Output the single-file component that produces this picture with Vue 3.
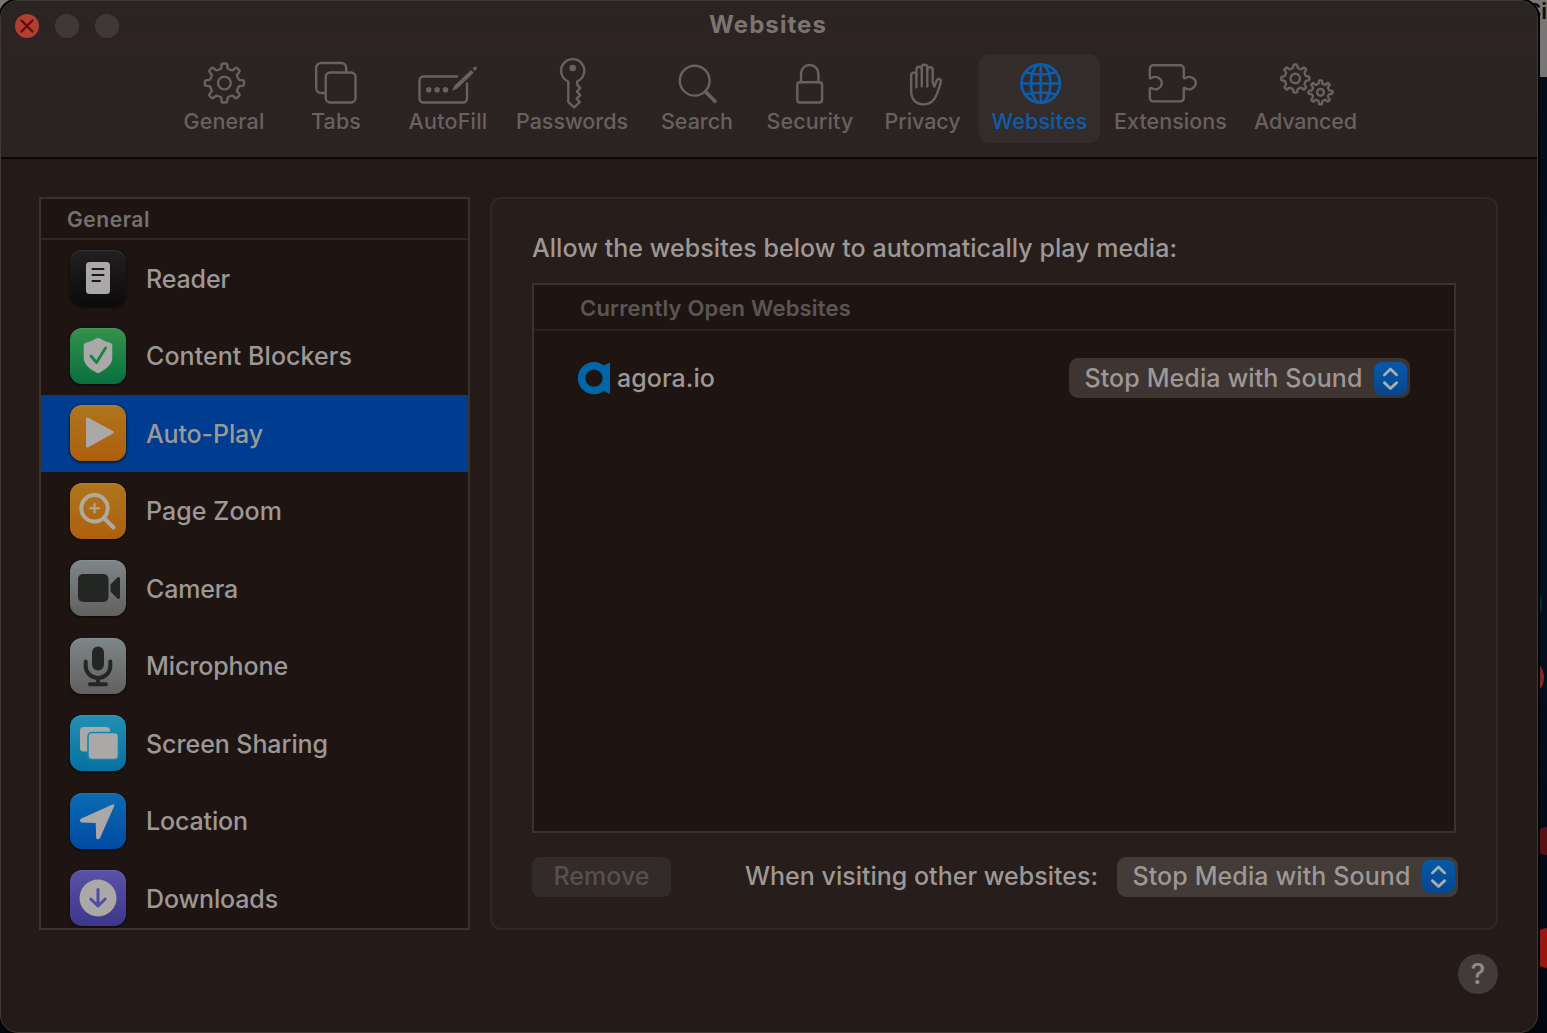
<script setup>
// Tracks an element's text so that it spans the given width.
const vFit = {
  mounted(el, { value }) {
    const range = document.createRange()
    range.selectNodeContents(el)
    const natural = range.getBoundingClientRect().width
    const count = el.textContent.trim().length
    el.style.letterSpacing = `${((value + 1 - natural) / count).toFixed(3)}px`
  }
}

// Outline of a cog wheel with softly rounded teeth.
function gear(cx, cy, outer, inner, teeth) {
  const step = (Math.PI * 2) / teeth
  const at = (r, a) => `${(cx + r * Math.sin(a)).toFixed(2)} ${(cy - r * Math.cos(a)).toFixed(2)}`
  let d = ''
  for (let i = 0; i < teeth; i++) {
    const a = i * step
    d += `${i ? 'L' : 'M'}${at(inner, a - step * 0.27)}`
    d += `L${at(outer - 1.6, a - step * 0.2)}Q${at(outer, a - step * 0.19)} ${at(outer, a - step * 0.1)}`
    d += `L${at(outer, a + step * 0.1)}Q${at(outer, a + step * 0.19)} ${at(outer - 1.6, a + step * 0.2)}`
    d += `L${at(inner, a + step * 0.27)}Q${at(inner - 1, a + step * 0.5)} ${at(inner, a + step * 0.73)}`
  }
  return d + 'Z'
}

const tools = [
  { name: 'General', slot: 112, text: 80 },
  { name: 'Tabs', slot: 112, text: 49 },
  { name: 'AutoFill', slot: 112, text: 78 },
  { name: 'Passwords', slot: 136, text: 111 },
  { name: 'Search', slot: 114, text: 71 },
  { name: 'Security', slot: 112, text: 86 },
  { name: 'Privacy', slot: 113, text: 75 },
  { name: 'Websites', slot: 121, text: 95, active: true },
  { name: 'Extensions', slot: 141, text: 112 },
  { name: 'Advanced', slot: 129, text: 102 }
]

const settings = [
  { name: 'Reader', tile: 'black', text: 83 },
  { name: 'Content Blockers', tile: 'green', text: 205 },
  { name: 'Auto-Play', tile: 'orange', text: 116, active: true },
  { name: 'Page Zoom', tile: 'orange', text: 135 },
  { name: 'Camera', tile: 'grey', text: 91 },
  { name: 'Microphone', tile: 'grey', text: 141 },
  { name: 'Screen Sharing', tile: 'cyan', text: 181 },
  { name: 'Location', tile: 'blue', text: 101 },
  { name: 'Downloads', tile: 'purple', text: 131 }
]
</script>

<template>
  <div class="desktop">
    <div class="behind-top"><span>Si</span></div>
    <i class="dot d1"></i><i class="dot d2"></i><i class="dot d3"></i><i class="dot d4"></i>

    <div class="window">
      <header class="toolbar">
        <div class="titlebar">
          <div class="lights">
            <span class="light close">
              <svg viewBox="0 0 24 24"><path d="M6.500 6.500l11 11M17.500 6.500l-11 11" /></svg>
            </span>
            <span class="light"></span>
            <span class="light"></span>
          </div>
          <h1><span v-fit="117">Websites</span></h1>
        </div>
        <nav class="tools">
          <button
            v-for="t in tools"
            :key="t.name"
            class="tool"
            :class="{ active: t.active }"
            :style="{ width: t.slot + 'px' }"
          >
            <svg class="glyph" viewBox="-32 -26 64 52">
              <template v-if="t.name === 'General'">
                <path :d="gear(0.4, 0, 19.6, 15, 8)" />
                <circle cx=".4" r="6.400" />
              </template>
              <template v-else-if="t.name === 'Tabs'">
                <path d="M-10.300 10h-4.500a5 5 0 0 1-5-5v-20a5 5 0 0 1 5-5h20a5 5 0 0 1 5 5v4" />
                <rect x="-10.300" y="-10.500" width="29.800" height="30" rx="4.500" />
              </template>
              <template v-else-if="t.name === 'AutoFill'">
                <path d="M9 -6.500h-33.500a4 4 0 0 0-4 4v18a4 4 0 0 0 4 4h39.500a4 4 0 0 0 4-4v-15" />
                <g class="solid">
                  <circle cx="-19.300" cy="6.700" r="2.800" /><circle cx="-10.900" cy="6.700" r="2.800" />
                  <circle cx="-2.500" cy="6.700" r="2.800" />
                  <path d="M4 8l2.300-5.300 16.800-15.700 2.600 2.700-16.700 16z" />
                  <path d="M24.500-14.200l1.700-1.800q1.200-1.100 2.300 0t0 2.300l-1.700 1.700z" />
                </g>
              </template>
              <template v-else-if="t.name === 'Passwords'">
                <path d="M-4 -1.200a11.600 11.600 0 1 1 8.800 0v3.200l3.200 3.200-3.400 3.700 3.400 3.500-3.700 3.600 3.200 3.400-5.600 5.200-5.900-5.200z" transform="translate(.3 -.3)" />
                <circle class="solid" cx=".7" cy="-15" r="3.300" />
              </template>
              <template v-else-if="t.name === 'Search'">
                <circle cx="-2.300" cy="-2.300" r="14.900" />
                <path class="thick" d="M8.700 9l9.300 9.300" />
              </template>
              <template v-else-if="t.name === 'Security'">
                <path d="M-9 -.700v-7.500c0-6.500 4-9.800 8.700-9.800s8.700 3.300 8.700 9.800v7.500" />
                <rect x="-12.700" y="-.700" width="24.800" height="20.200" rx="2.800" />
              </template>
              <template v-else-if="t.name === 'Privacy'">
                <path transform="translate(0 .7)" d="M-11.800 5v-13.500a2.600 2.600 0 0 1 5.200 0v-5.800a2.700 2.700 0 0 1 5.400 0v-2a2.700 2.700 0 0 1 5.500 0v2.400a2.700 2.700 0 0 1 5.400 0v12.400l1.600 4.500 2.400-6.200c.9-2.200 4.700-2 4.200.9-1 5.300-3 9.800-4.300 13.300-2.300 5.900-6.400 9.700-12.500 9.700-8 0-12.900-5-12.900-13.200z" />
                <path d="M-6.600-9v13.200M-1.200-14.300v17.500M4.300-14v17.500" />
              </template>
              <template v-else-if="t.name === 'Websites'">
                <g class="globe">
                  <circle cx=".7" cy=".5" r="19.200" /><ellipse cx=".7" cy=".5" rx="9.700" ry="19.200" />
                  <path d="M.7-18.700v38.400M-18.500.5h38.400M-14.300-10.500Q.7-6.500 15.700-10.500M-14.300 11.500Q.7 7.500 15.700 11.500" />
                </g>
              </template>
              <template v-else-if="t.name === 'Extensions'">
                <path transform="translate(.6 .3)" d="M-21.800-5v-9.500a3.500 3.500 0 0 1 3.500-3.500h27a3.500 3.500 0 0 1 3.500 3.500v8.500q0 1.500 1.500.8c4-3 10.500 .1 10.500 5s-6.500 8-10.500 5q-1.500-.8-1.500.8v9a3.500 3.500 0 0 1-3.500 3.500h-27a3.500 3.500 0 0 1-3.500-3.500v-9q0-1.500 1.500-.8c4.500 3 10.500-.1 10.500-5s-6-8-10.500-5q-1.500.8-1.500-.8z" />
              </template>
              <template v-else>
                <path :d="gear(-10.7, -4.5, 14.1, 11, 8)" />
                <circle cx="-10.700" cy="-4.500" r="4.700" />
                <path :d="gear(14.500, 9.300, 12, 9, 8)" />
                <circle cx="14.500" cy="9.300" r="3.400" />
              </template>
            </svg>
            <span class="label"><span v-fit="t.text">{{ t.name }}</span></span>
          </button>
        </nav>
      </header>

      <main class="content">
        <aside class="sidebar">
          <h2><span v-fit="82">General</span></h2>
          <ul>
            <li v-for="s in settings" :key="s.name" :class="{ active: s.active }">
              <span class="tile" :class="s.tile">
                <svg viewBox="0 0 56 56">
                  <template v-if="s.name === 'Reader'">
                    <rect class="w" x="16" y="12" width="24" height="32" rx="3.500" />
                    <path d="M22.500 19h11M22.500 25h11M22.500 31h7.500" stroke="#191718" stroke-width="2" stroke-linecap="round" />
                  </template>
                  <template v-else-if="s.name === 'Content Blockers'">
                    <path class="w" d="M28 10q1 0 2 .6c3.700 2.200 6.500 3.400 10.500 4.400q1.800.5 1.800 2.300v12c0 7.500-6 11.700-12.500 15.200q-1.800 1-3.600 0c-6.500-3.500-12.500-7.700-12.500-15.200v-12q0-1.800 1.800-2.300c4-1 6.800-2.200 10.500-4.400q1-.6 2-.6z" />
                    <path d="M21 28l5.500 6.500 9-14.500" fill="none" stroke="#168545" stroke-width="2.800" stroke-linecap="round" stroke-linejoin="round" />
                  </template>
                  <template v-else-if="s.name === 'Auto-Play'">
                    <path class="w" d="M18.300 12.700l24.500 13.200q2.200 1.300 0 2.600l-24.500 13.800q-2.300 1-2.300-1.300v-27q0-2.300 2.300-1.300z" />
                  </template>
                  <template v-else-if="s.name === 'Page Zoom'">
                    <circle cx="24.500" cy="25.300" r="13.200" class="line" />
                    <path d="M34.500 35.500l9 9" class="line" stroke-width="4.500" stroke-linecap="round" />
                    <path d="M24.500 20.700v9M20 25.200h9" class="line thin" />
                  </template>
                  <template v-else-if="s.name === 'Camera'">
                    <rect class="k" x="8" y="14" width="30.500" height="28" rx="5" />
                    <path class="k" d="M40.500 24.500l6.300-6.500q3.200-2.500 3.200 1v18q0 3.500-3.200 1l-6.300-6.500z" />
                  </template>
                  <template v-else-if="s.name === 'Microphone'">
                    <rect class="k" x="22" y="8.500" width="12" height="24" rx="6" />
                    <path d="M15.700 23.500v4.500a12.300 12 0 0 0 24.600 0v-4.500M28 40v6M20 46.300h16" fill="none" stroke="#242624" stroke-width="4" stroke-linecap="round" />
                  </template>
                  <template v-else-if="s.name === 'Screen Sharing'">
                    <rect class="w" x="10" y="12" width="30" height="24.500" rx="3.500" />
                    <rect class="w" x="18" y="17.500" width="30.500" height="27" rx="4" stroke="#1187b0" stroke-width="1.600" />
                  </template>
                  <template v-else-if="s.name === 'Location'">
                    <path class="w" d="M42.500 11.500q2.500-.8 1.500 2l-14 31.500q-2 2.500-3.800.3l-.5-15.300-14.200-.6q-2.800-1.300-.6-3.600z" />
                  </template>
                  <template v-else>
                    <circle class="w" cx="28" cy="28" r="18.500" />
                    <path d="M28 19.500v15M20.800 29l7.200 7 7.200-7" fill="none" stroke="#514aa8" stroke-width="3" stroke-linecap="round" stroke-linejoin="round" />
                  </template>
                </svg>
              </span>
              <span class="name" v-fit="s.text">{{ s.name }}</span>
            </li>
          </ul>
        </aside>

        <section class="pane">
          <p class="intro"><span v-fit="644">Allow the websites below to automatically play media:</span></p>
          <div class="table">
            <div class="thead"><span v-fit="270">Currently Open Websites</span></div>
            <div class="site">
              <svg class="agora" viewBox="0 0 32 33">
                <path fill-rule="evenodd" d="M16 0c4 0 7 1.300 9.500 3.500L32 .5V32l-6.500-3C23 31 20 32.300 16 32.300A16 16 0 0 1 16 0zm0 7.600a8.600 8.600 0 1 0 0 17.200 8.600 8.600 0 0 0 0-17.200z" />
              </svg>
              <span class="host" v-fit="97">agora.io</span>
              <div class="select">
                <span v-fit="277">Stop Media with Sound</span>
                <i><svg viewBox="0 0 32 32"><path d="M10 12.500l6-5.700 6 5.700M10 20l6 5.700 6-5.700" /></svg></i>
              </div>
            </div>
          </div>
          <footer class="controls">
            <button class="remove"><span v-fit="95">Remove</span></button>
            <span class="other" v-fit="352">When visiting other websites:</span>
            <div class="select light-select">
              <span v-fit="277">Stop Media with Sound</span>
              <i><svg viewBox="0 0 32 32"><path d="M10 12.500l6-5.700 6 5.700M10 20l6 5.700 6-5.700" /></svg></i>
            </div>
          </footer>
        </section>
      </main>
      <div class="help-row"><button class="help">?</button></div>
    </div>
  </div>
</template>

<style>
body {
  background: #050a14;
  overflow: hidden;
}
</style>

<style scoped>
* {
  box-sizing: border-box;
  margin: 0;
  padding: 0;
}
.desktop {
  position: relative;
  width: 1547px;
  height: 1033px;
  overflow: hidden;
  background: linear-gradient(#050b17, #04101f 55%, #020611);
  font-family: Inter, "Liberation Sans", sans-serif;
  color: #9d9896;
}
button {
  border: 0;
  background: none;
  font: inherit;
  color: inherit;
}
.behind-top {
  position: absolute;
  right: 0;
  top: 0;
  width: 1547px;
  height: 77px;
  background: #777575;
  overflow: hidden;
}
.behind-top span {
  position: absolute;
  right: 0;
  top: -2px;
  font-size: 22px;
  line-height: 26px;
  font-weight: 600;
  color: #100d0d;
}
.dot {
  position: absolute;
  border-radius: 50%;
}
.d1 { left: 1529px; top: 592px; width: 13px; height: 24px; background: #06352f; }
.d2 { left: 1524px; top: 663px; width: 20px; height: 29px; background: #7c2b20; }
.d3 { left: 1534px; top: 827px; width: 26px; height: 28px; background: #571013; }
.d4 { left: 1529px; top: 928px; width: 38px; height: 40px; background: #971610; }

.window {
  position: relative;
  display: flex;
  flex-direction: column;
  width: 1538px;
  height: 1033px;
  border: 1px solid #403a37;
  border-radius: 18px;
  background: #241b19;
  overflow: hidden;
  box-shadow: 0 0 0 2px #050404;
}
.toolbar {
  height: 158px;
  flex: none;
  background: linear-gradient(#2a2522, #2c2322 20%, #2b2322);
  border-bottom: 2px solid #0b0605;
}
.titlebar {
  display: flex;
  height: 53px;
}
.lights {
  display: flex;
  gap: 16px;
  padding: 13px 0 0 13.500px;
  width: 200px;
}
.light {
  width: 24px;
  height: 24px;
  border-radius: 50%;
  background: #403836;
}
.close { background: #b13e31; }
.close svg {
  display: block;
  fill: none;
  stroke: #650906;
  stroke-width: 2.2;
  stroke-linecap: round;
}
h1 {
  width: 1134px;
  text-align: center;
  font-size: 24px;
  font-weight: 700;
  line-height: 48px;
  color: #7b7572;
}
.tools {
  display: flex;
  padding-left: 167px;
}
.tool {
  display: flex;
  flex-direction: column;
  align-items: center;
  flex: none;
  height: 89px;
  padding-top: 3px;
  border-radius: 11px;
  color: #67615f;
}
.tool.active {
  background: #342c2a;
  color: #0c5dab;
}
.glyph {
  width: 64px;
  height: 52px;
  flex: none;
  fill: none;
  stroke: currentColor;
  stroke-width: 2.4;
  stroke-linejoin: round;
  stroke-linecap: round;
}
.globe { stroke-width: 2.700; }
.solid {
  fill: currentColor;
  stroke: none;
}
.thick { stroke-width: 3.600; }
.label {
  font-size: 21.500px;
  font-weight: 500;
  line-height: 24px;
  white-space: nowrap;
}

.content {
  display: flex;
  gap: 20px;
  padding: 37.500px 39px 0 38px;
}
.sidebar {
  width: 431.500px;
  height: 733px;
  border: 2px solid #3a3230;
  background: #1e1513;
  overflow: hidden;
}
h2 {
  height: 41px;
  padding-left: 26px;
  border-bottom: 2px solid #312826;
  font-size: 21px;
  font-weight: 600;
  line-height: 41px;
  color: #767170;
}
ul { list-style: none; }
li {
  display: flex;
  align-items: center;
  gap: 20px;
  height: 77.500px;
  padding-left: 29px;
  font-size: 25px;
  font-weight: 500;
  white-space: nowrap;
}
li.active {
  background: #003c8f;
}
.name { padding-top: 1px; }
.tile {
  width: 56px;
  height: 56px;
  border-radius: 12px;
  box-shadow: 0 1px 3px #0b0605, inset 0 1px 1px #ffffff18;
}
.tile svg { display: block; }
.black { background: linear-gradient(#211f20, #0c0b0b); }
.green { background: linear-gradient(#35924c, #086f3e); }
.orange { background: linear-gradient(#ae761c, #ae5f0d); }
.grey { background: linear-gradient(#7d8689, #62605f); }
.cyan { background: linear-gradient(#2290b1, #0670a0); }
.blue { background: linear-gradient(#0c6bb0, #004ba6); }
.purple { background: linear-gradient(#5953a8, #3b378a); }
.w { fill: #aaa9a8; }
.k { fill: #242624; }
.line {
  fill: none;
  stroke: #b0aa9b;
  stroke-width: 4;
}
.thin { stroke-width: 2; stroke-linecap: round; }

.pane {
  width: 1008px;
  height: 733px;
  padding: 29px 38px 0 40px;
  border: 2px solid #302826;
  border-radius: 11px;
  background: #271e1c;
}
.intro {
  height: 55px;
  font-size: 25px;
  font-weight: 500;
  line-height: 40px;
  white-space: nowrap;
}
.table {
  width: 924px;
  height: 550px;
  border: 2px solid #3a3230;
  background: #1e1513;
}
.thead {
  height: 46px;
  padding-left: 46px;
  border-bottom: 2px solid #2b2220;
  font-size: 22px;
  font-weight: 600;
  line-height: 47px;
  color: #5c5553;
}
.site {
  display: flex;
  align-items: center;
  height: 95px;
  padding: 0 44px 0 44px;
  font-size: 25px;
  font-weight: 500;
}
.agora {
  width: 32px;
  height: 33px;
  fill: #0066a8;
}
.host { margin-left: 7px; }
.select {
  display: flex;
  align-items: center;
  justify-content: space-between;
  width: 341px;
  height: 40px;
  padding: 0 3px 1px 15.500px;
  margin-left: auto;
  border-radius: 9px;
  background: #3e3533;
  font-size: 25px;
  font-weight: 500;
  white-space: nowrap;
}
.select i {
  position: relative;
  top: .5px;
  width: 33px;
  height: 33px;
  border-radius: 8px;
  background: linear-gradient(#0759a9, #06468c);
}
.select svg {
  display: block;
  fill: none;
  stroke: #a7adb3;
  stroke-width: 2.7;
  stroke-linecap: round;
  stroke-linejoin: round;
}
.light-select { background: #423b38; }
.controls {
  display: flex;
  align-items: center;
  width: 926px;
  padding-top: 24px;
  font-size: 25px;
  font-weight: 500;
  white-space: nowrap;
}
.remove {
  width: 139px;
  height: 40px;
  padding-bottom: 1px;
  border-radius: 8px;
  background: #332b29;
  color: #57504e;
}
.other {
  margin-left: 74px;
  padding-bottom: 1px;
}
.help-row {
  display: flex;
  justify-content: flex-end;
  padding: 24px 39px 0 0;
}
.help {
  width: 40px;
  height: 40px;
  border-radius: 50%;
  background: #433b39;
  color: #928c89;
  font-size: 28px;
  font-weight: 500;
  line-height: 40px;
}
</style>
